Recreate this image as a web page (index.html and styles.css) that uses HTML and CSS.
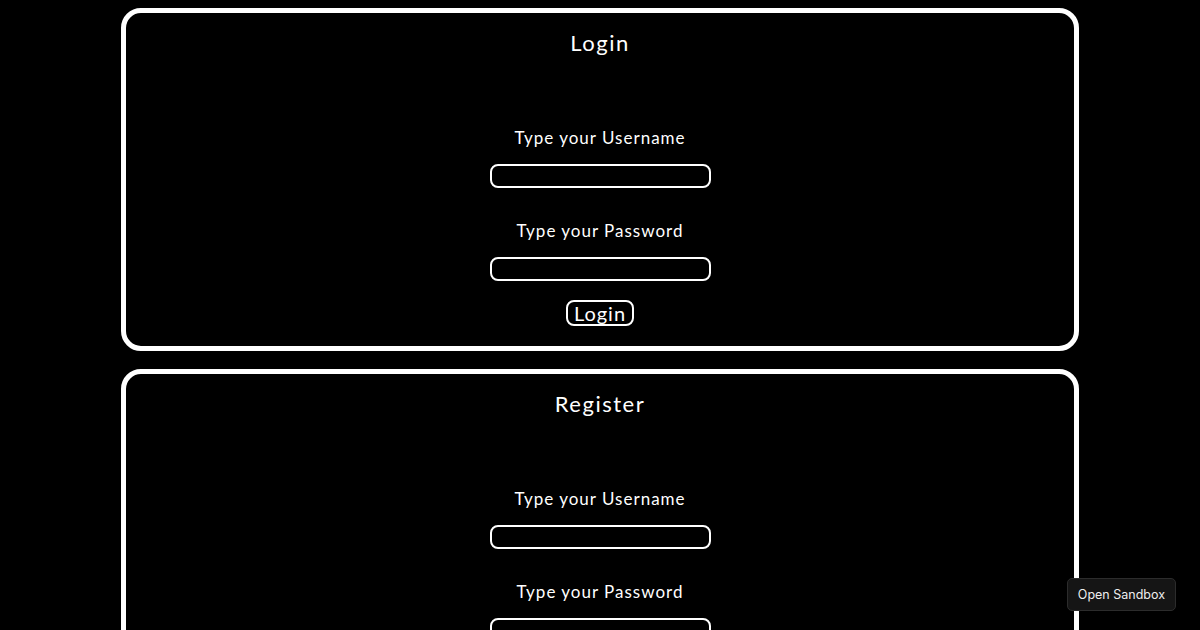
FILE: index.html
```html
<!doctype html>
<html lang="en">

<head>
	<meta charset="UTF-8">
	<title>Login / Register</title>
	<meta name="viewport" content="width=device-width, initial-scale=1">
	<link rel="stylesheet" href="styles.css">
</head>

<body>
	<div class="Card">
		<h2 class="Title">Login</h2>
		<label class="Label" for="loginUser">Type your Username</label>
		<input type="text" id="loginUser" class="Field">
		<label class="Label Second" for="loginPass">Type your Password</label>
		<input type="password" id="loginPass" class="Field">
		<button class="Submit">Login</button>
	</div>
	<div class="Card">
		<h2 class="Title">Register</h2>
		<label class="Label" for="regUser">Type your Username</label>
		<input type="text" id="regUser" class="Field">
		<label class="Label Second" for="regPass">Type your Password</label>
		<input type="password" id="regPass" class="Field">
		<button class="Submit">Register</button>
	</div>
	<button class="Sandbox">Open Sandbox</button>
</body>

</html>
```

FILE: styles.css
```css
html,
body {
	background-color: black;
	overflow: hidden;
}

body {
	margin: 8px 0 0 0;
	color: white;
	font-family: "Lato", "Noto Sans", sans-serif;
}

div.Card {
	width: 948px;
	margin: 0 auto 18px auto;
	border: 5px solid white;
	border-radius: 20px;
	display: flex;
	flex-direction: column;
	align-items: center;
	padding: 17px 0 20px 0;
}

h2.Title {
	font-size: 22px;
	font-weight: normal;
	letter-spacing: 1.5px;
	line-height: 26px;
	margin: 0 0 72px 0;
}

label.Label {
	font-size: 17px;
	letter-spacing: 1px;
	line-height: 20px;
	margin-bottom: 16px;
}

label.Second {
	margin-top: 33px;
}

input.Field {
	box-sizing: border-box;
	width: 221px;
	height: 24px;
	background-color: black;
	color: white;
	border: 2px solid white;
	border-radius: 8px;
	margin: 0;
}

button.Submit {
	margin-top: 19px;
	height: 26px;
	padding: 0 6px;
	background-color: black;
	color: white;
	border: 2px solid white;
	border-radius: 8px;
	font-family: "Lato", "Noto Sans", sans-serif;
	font-size: 20px;
	letter-spacing: 1px;
	line-height: 20px;
}

button.Sandbox {
	position: fixed;
	right: 24px;
	bottom: 19px;
	height: 33px;
	padding: 0 10px;
	background-color: #151515;
	color: #eeeeee;
	border: 1px solid #2c2c2c;
	border-radius: 5px;
	font-family: "Inter", "Roboto", sans-serif;
	font-size: 12.5px;
}
```
